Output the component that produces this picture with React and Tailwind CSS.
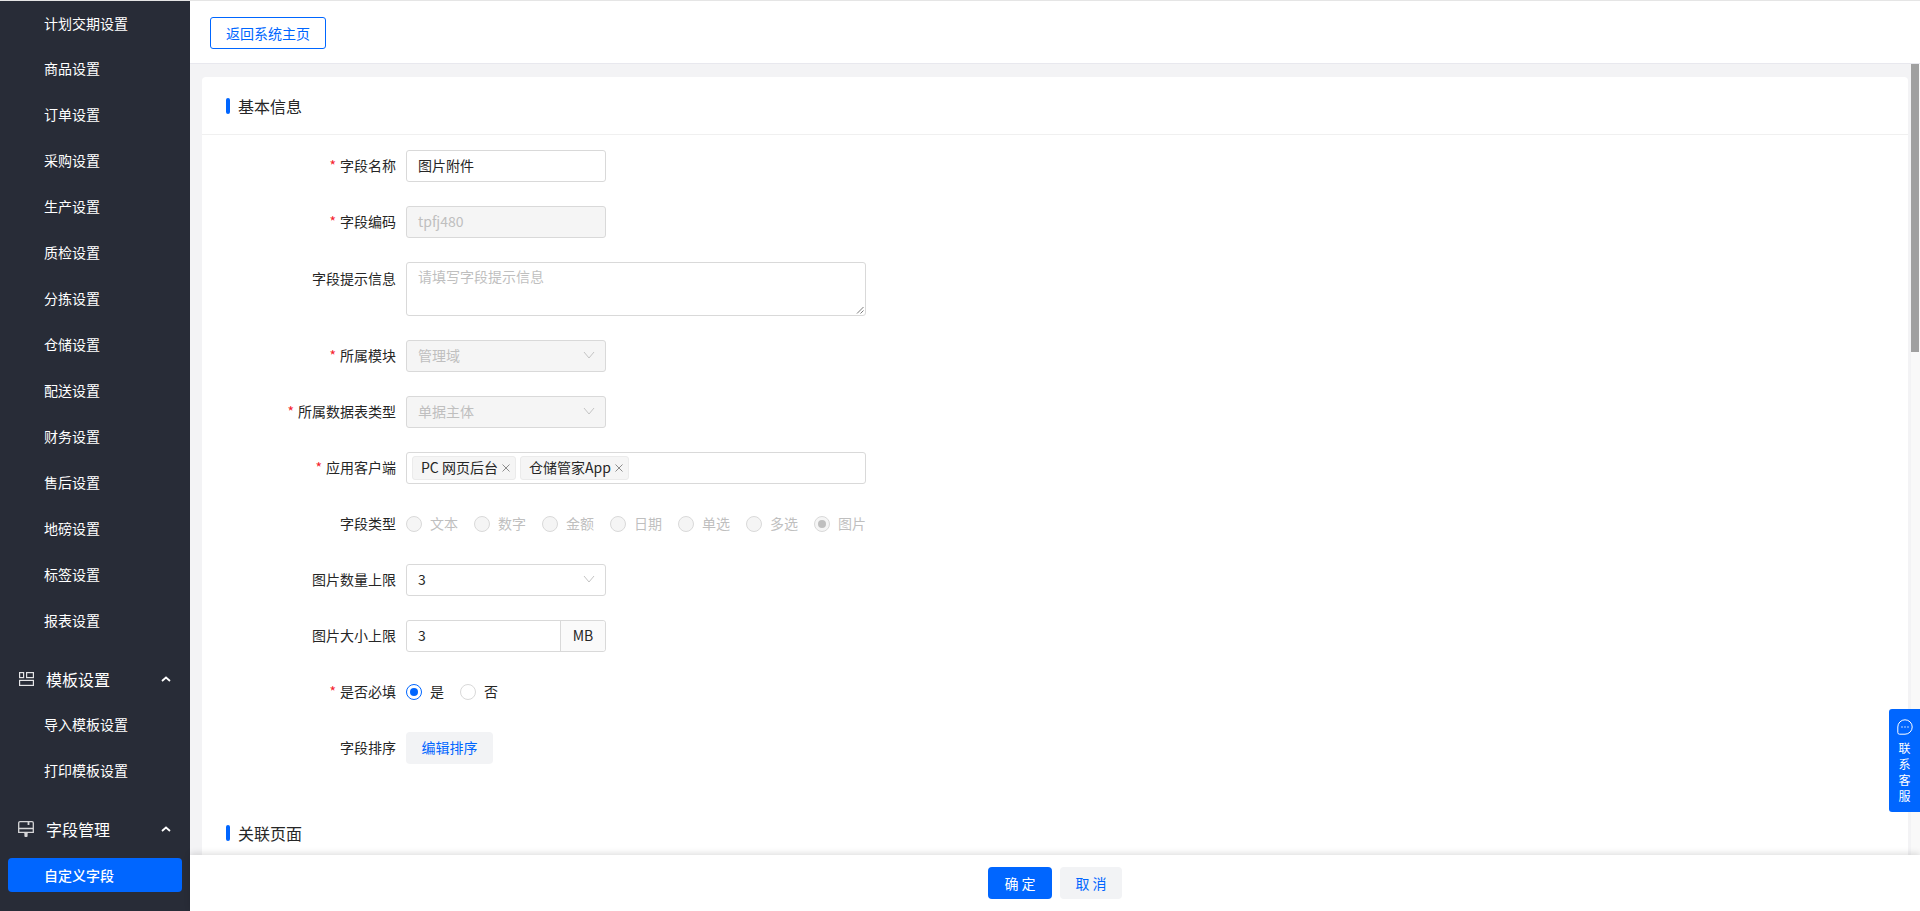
const items1 = ["计划交期设置","商品设置","订单设置","采购设置","生产设置","质检设置","分拣设置","仓储设置","配送设置","财务设置","售后设置","地磅设置","标签设置","报表设置"];

function Chevron() {
  return (
    <svg width="10" height="6" viewBox="0 0 10 6" fill="none" className="ml-auto mr-[19px]">
      <path d="M1 5 L5 1.5 L9 5" stroke="#fff" strokeWidth="1.8" />
    </svg>
  );
}

function TemplateIcon() {
  return (
    <svg width="15" height="14" viewBox="0 0 15 14" fill="none" stroke="#e4e4e6" strokeWidth="1.2">
      <rect x="0.6" y="0.6" width="4" height="5" />
      <rect x="7.6" y="0.6" width="6.8" height="5" />
      <rect x="0.6" y="8.4" width="13.8" height="5" />
    </svg>
  );
}

function FieldIcon() {
  return (
    <svg width="16" height="17" viewBox="0 0 16 17" fill="none" stroke="#d6d6d8" strokeWidth="1.3">
      <path d="M2 .7 H14 A1.3 1.3 0 0 1 15.3 2 V11.3 H.7 V2 A1.3 1.3 0 0 1 2 .7 Z M.7 7.5 H15.3" />
      <path d="M10.5 .7 V4" strokeWidth="1.8" />
      <rect x="6.4" y="11.3" width="3.2" height="4.6" rx="1" fill="#d6d6d8" stroke="none" />
    </svg>
  );
}

function Arrow() {
  return (
    <svg width="12" height="8" viewBox="0 0 12 8" fill="none" className="ml-auto -mr-[1px]">
      <path d="M1 1 L6 7 L11 1" stroke="#c4c4c4" strokeWidth="1" />
    </svg>
  );
}

function Label({ req, children, top }) {
  return (
    <div className={`w-[204px] pr-[10px] pb-[2px] flex justify-end text-[14px] leading-[32px] text-[#262626] shrink-0 ${top ? "self-start" : ""}`}>
      {req && <span className="text-[#f5222d] mr-[4px]">*</span>}
      {children}
    </div>
  );
}

function Row({ label, req, children }) {
  return (
    <div className="flex items-center mb-[24px] h-[32px]">
      <Label req={req}>{label}</Label>
      {children}
    </div>
  );
}

const box = "h-[32px] w-[200px] rounded-[3px] border border-[#d9d9d9] px-[11px] pb-[2px] text-[14px] flex items-center";
const off = "bg-[#f5f5f5] text-[#bfbfbf]";

function Radio({ label, checked, disabled }) {
  return (
    <div className="flex items-center mr-[16px] last:mr-0">
      <span className={`w-[16px] h-[16px] rounded-full border flex items-center justify-center mr-[8px] ${disabled ? "bg-[#f5f5f5] border-[#d9d9d9]" : checked ? "border-[#0066ff] bg-white" : "border-[#d9d9d9] bg-white"}`}>
        {checked && <span className={`w-[8px] h-[8px] rounded-full ${disabled ? "bg-[#bfbfbf]" : "bg-[#0066ff]"}`} />}
      </span>
      <span className={`text-[14px] pb-[2px] ${disabled ? "text-[#bfbfbf]" : "text-[#262626]"}`}>{label}</span>
    </div>
  );
}

function Tag({ children }) {
  return (
    <span className="h-[24px] flex items-center rounded-[3px] border border-[#ebebeb] bg-[#f5f5f5] pl-[8px] pr-[4px] text-[14px] text-[#262626] mr-[4px]">
      <span className="pb-[2px]">{children}</span>
      <svg width="10" height="10" viewBox="0 0 10 10" className="ml-[3px]" stroke="#8c8c8c" strokeWidth="1" fill="none">
        <path d="M1.5 1.5 L8.5 8.5 M8.5 1.5 L1.5 8.5" />
      </svg>
    </span>
  );
}

function SectionTitle({ children }) {
  return (
    <div className="flex items-center">
      <span className="w-[4px] h-[16px] rounded-[2px] bg-[#0066ff] ml-[24px] mr-[8px]" />
      <span className="text-[16px] text-[#262626]">{children}</span>
    </div>
  );
}

export default function App() {
  return (
    <div
      className="h-[911px] w-[1920px] overflow-hidden flex flex-col bg-white relative"
      style={{ fontFamily: '"Noto Sans CJK SC", "Noto Sans", sans-serif' }}
    >
      <div className="h-px bg-[#e5e5e5] shrink-0" />
      <div className="flex flex-1 min-h-0">
        <aside className="w-[190px] shrink-0 bg-[#282c37] text-white text-[14px] overflow-hidden">
          <div className="h-[44px] flex items-center pl-[44px]">{items1[0]}</div>
          {items1.slice(1).map((t) => (
            <div key={t} className="h-[46px] flex items-center pl-[44px]">{t}</div>
          ))}
          <div className="h-[45px] flex items-center pl-[19px] text-[16px] mt-[13px]">
            <TemplateIcon />
            <span className="ml-[12px]">模板设置</span>
            <Chevron />
          </div>
          <div className="h-[46px] flex items-center pl-[44px]">导入模板设置</div>
          <div className="h-[46px] flex items-center pl-[44px]">打印模板设置</div>
          <div className="h-[46px] flex items-center pl-[18px] text-[16px] mt-[13px]">
            <FieldIcon />
            <span className="ml-[12px]">字段管理</span>
            <Chevron />
          </div>
          <div className="mx-[8px] mt-[6px] h-[34px] rounded-[4px] bg-[#0066ff] flex items-center pl-[36px] font-medium">自定义字段</div>
        </aside>

        <div className="flex-1 min-w-0 flex flex-col">
          <div className="h-[63px] shrink-0 border-b border-[#e8e8ee] flex items-start pt-[16px] pl-[20px]">
            <button className="h-[32px] w-[116px] rounded-[3px] border border-[#0066ff] text-[#0066ff] text-[14px]">返回系统主页</button>
          </div>

          <div className="flex-1 min-h-0 flex bg-[#f3f3f5] overflow-hidden">
            <main className="flex-1 min-w-0 pl-[12px] pt-[13px] pr-[3px]">
              <div className="bg-white rounded-t-[4px] h-full flex flex-col overflow-hidden">
                <div className="h-[58px] shrink-0 border-b border-[#f0f0f0] flex items-center">
                  <SectionTitle>基本信息</SectionTitle>
                </div>
                <div className="pt-[15px]">
                  <Row label="字段名称" req>
                    <div className={`${box} text-[#262626]`}>图片附件</div>
                  </Row>
                  <Row label="字段编码" req>
                    <div className={`${box} ${off}`}>tpfj480</div>
                  </Row>
                  <div className="flex mb-[24px]">
                    <Label top>字段提示信息</Label>
                    <div className="h-[54px] w-[460px] rounded-[3px] border border-[#d9d9d9] px-[11px] pt-[3px] text-[14px] text-[#bfbfbf] relative">
                      请填写字段提示信息
                      <svg width="8" height="8" viewBox="0 0 8 8" className="absolute right-px bottom-px" stroke="#595959" strokeWidth="0.8">
                        <path d="M1 7.5 L7.5 1 M4.5 7.5 L7.5 4.5" />
                      </svg>
                    </div>
                  </div>
                  <Row label="所属模块" req>
                    <div className={`${box} ${off}`}>管理域<Arrow /></div>
                  </Row>
                  <Row label="所属数据表类型" req>
                    <div className={`${box} ${off}`}>单据主体<Arrow /></div>
                  </Row>
                  <Row label="应用客户端" req>
                    <div className="h-[32px] w-[460px] rounded-[3px] border border-[#d9d9d9] pl-[5px] flex items-center">
                      <Tag>PC 网页后台</Tag>
                      <Tag>仓储管家App</Tag>
                    </div>
                  </Row>
                  <Row label="字段类型">
                    <div className="flex h-[32px] items-center">
                      {["文本","数字","金额","日期","单选","多选"].map((t) => (
                        <Radio key={t} label={t} disabled />
                      ))}
                      <Radio label="图片" disabled checked />
                    </div>
                  </Row>
                  <Row label="图片数量上限">
                    <div className={`${box} text-[#262626]`}>3<Arrow /></div>
                  </Row>
                  <Row label="图片大小上限">
                    <div className="h-[32px] w-[200px] flex rounded-[3px] border border-[#d9d9d9] text-[14px] text-[#262626]">
                      <div className="flex-1 flex items-center px-[11px] pb-[2px]">3</div>
                      <div className="w-[45px] border-l border-[#d9d9d9] bg-[#fafafa] flex items-center justify-center rounded-r-[3px] pb-[2px]">MB</div>
                    </div>
                  </Row>
                  <Row label="是否必填" req>
                    <div className="flex h-[32px] items-center">
                      <Radio label="是" checked />
                      <Radio label="否" />
                    </div>
                  </Row>
                  <Row label="字段排序">
                    <button className="h-[32px] w-[87px] rounded-[4px] bg-[#f2f3f5] text-[#0066ff] text-[14px] pb-[1px]">编辑排序</button>
                  </Row>
                </div>
                <div className="mt-[33px]">
                  <SectionTitle>关联页面</SectionTitle>
                </div>
              </div>
            </main>
            <div className="w-[9px] shrink-0 bg-[#f9f9f9]">
              <div className="w-[8px] h-[288px] bg-[#a0a0a0]" />
            </div>
          </div>

          <div className="h-[56px] shrink-0 bg-white shadow-[0_-2px_6px_rgba(0,0,0,0.12)] relative flex items-center justify-center gap-[8px]">
            <button className="h-[32px] w-[64px] rounded-[4px] bg-[#0066ff] text-white text-[14px] tracking-[3px] pl-[3px]">确定</button>
            <button className="h-[32px] w-[62px] rounded-[4px] bg-[#f2f3f5] text-[#0066ff] text-[14px] tracking-[3px] pl-[3px]">取消</button>
          </div>
        </div>
      </div>

      <div className="absolute right-0 top-[709px] w-[31px] h-[103px] bg-[#0066ff] rounded-l-[3px] text-white text-[12px] flex flex-col items-center pt-[10px] leading-[16px]">
        <svg width="16" height="16" viewBox="0 0 16 16" fill="none" stroke="#fff" strokeWidth="1" className="mb-[5px]">
          <path d="M8 .8 A7.2 7.2 0 1 1 8 15.2 H2.5 A1.7 1.7 0 0 1 .8 13.5 V8 A7.2 7.2 0 0 1 8 .8 Z" />
          <circle cx="5" cy="8" r="0.7" fill="#fff" stroke="none" />
          <circle cx="8" cy="8" r="0.7" fill="#fff" stroke="none" />
          <circle cx="11" cy="8" r="0.7" fill="#fff" stroke="none" />
        </svg>
        <span>联</span><span>系</span><span>客</span><span>服</span>
      </div>
    </div>
  );
}
